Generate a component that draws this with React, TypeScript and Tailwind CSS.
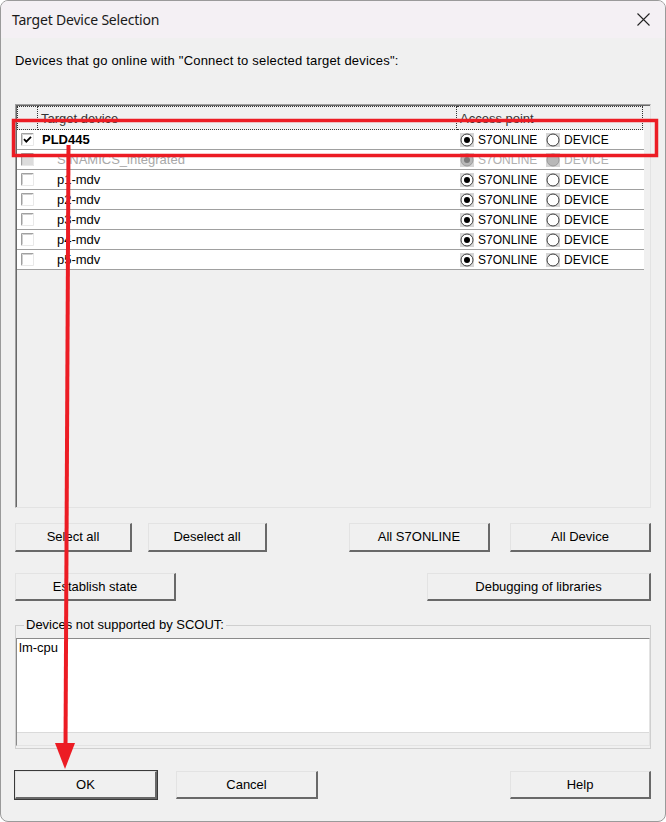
import React from 'react';

const devices = [
  { name: 'PLD445', checked: true, bold: true, disabled: false },
  { name: 'SINAMICS_integrated', checked: false, bold: false, disabled: true },
  { name: 'p1-mdv', checked: false, bold: false, disabled: false },
  { name: 'p2-mdv', checked: false, bold: false, disabled: false },
  { name: 'p3-mdv', checked: false, bold: false, disabled: false },
  { name: 'p4-mdv', checked: false, bold: false, disabled: false },
  { name: 'p5-mdv', checked: false, bold: false, disabled: false },
];

function Checkbox({ checked, disabled }: { checked: boolean; disabled: boolean }) {
  return (
    <svg width="13" height="13" viewBox="0 0 13 13">
      <rect x="0" y="0" width="13" height="13" fill={disabled ? '#dcdcdc' : '#ffffff'} />
      <path d="M0.5 12.5 V0.5 H12.5" fill="none" stroke="#a0a0a0" />
      <path d="M1.5 11.5 V1.5 H11.5" fill="none" stroke="#d0d0d0" />
      <path d="M0.5 12.5 H12.5 V0.5" fill="none" stroke="#e8e8e8" />
      {checked && <path d="M3 6.2 L5.3 8.6 L10 3.8" fill="none" stroke="#000" strokeWidth="1.8" />}
    </svg>
  );
}

function Radio({ on, disabled }: { on: boolean; disabled: boolean }) {
  return (
    <svg width="14" height="14" viewBox="0 0 14 14">
      <rect x="0" y="0" width="14" height="14" fill="#d6d6d6" />
      <circle cx="7" cy="7" r="6" fill={disabled ? '#b8b8b8' : '#ffffff'} stroke={disabled ? '#9a9a9a' : '#3c3c3c'} strokeWidth="1" />
      {on && <circle cx="7" cy="7" r="3" fill={disabled ? '#7a7a7a' : '#000000'} />}
    </svg>
  );
}

function Btn({ label, className = '', isDefault = false }: { label: string; className?: string; isDefault?: boolean }) {
  return (
    <button
      className={
        'flex items-center justify-center bg-[#f0f0f0] text-[13px] text-black border-t border-l border-t-[#e3e3e3] border-l-[#e3e3e3] border-r-2 border-b-2 border-r-[#696969] border-b-[#696969] ' +
        (isDefault ? 'outline outline-1 outline-[#3a3a3a] ' : '') +
        className
      }
    >
      {label}
    </button>
  );
}

export default function App() {
  return (
    <div className="w-[666px] h-[822px] bg-white">
      <div className="relative w-[666px] h-[822px] rounded-[8px] border border-[#9a9a9a] overflow-hidden bg-[#f0f0f0] font-['Liberation_Sans',Arial,sans-serif] text-black">
        {/* title bar */}
        <div className="h-[37px] bg-[#f4f0f4] flex items-center justify-between pl-[11px] pr-[15px]">
          <span className="font-['Noto_Sans',sans-serif] text-[14px] tracking-[-0.2px] text-[#1a1a1a]">Target Device Selection</span>
          <svg width="13" height="13" viewBox="0 0 13 13">
            <path d="M0.5 0.5 L12.5 12.5 M12.5 0.5 L0.5 12.5" stroke="#222" strokeWidth="1.1" />
          </svg>
        </div>

        <div className="px-[14px]">
          <div className="mt-[15px] text-[13px] leading-[16px] tracking-[0.2px]">
            Devices that go online with "Connect to selected target devices":
          </div>

          {/* device list */}
          <div className="mt-[35px] h-[404px] border-t border-l border-[#a0a0a0] border-r border-b border-r-[#e3e3e3] border-b-[#e3e3e3]">
            <div className="h-full border-t border-l border-[#696969] border-r-0 border-b-0 pr-[6px]">
              <div className="flex h-[24px] text-[13px] text-[#333]">
                <div className="w-[21px] border border-dotted border-[#333]" />
                <div className="w-[419px] border border-l-0 border-dotted border-[#333] pl-[3px] leading-[24px]">Target device</div>
                <div className="w-[186px] border border-l-0 border-dotted border-[#333] pl-[3px] leading-[24px]">Access point</div>
              </div>
              {devices.map((d) => (
                <div key={d.name} className="flex items-center h-[20px] bg-white border-b border-[#a0a0a0] text-[13px]">
                  <div className="w-[21px] pl-[4px] flex items-center">
                    <Checkbox checked={d.checked} disabled={d.disabled} />
                  </div>
                  <div
                    className={
                      'w-[419px] ' +
                      (d.bold ? 'pl-[4px] font-bold ' : 'pl-[19px] ') +
                      (d.disabled ? 'text-[#a8a8a8]' : 'text-black')
                    }
                  >
                    {d.name}
                  </div>
                  <div className={'flex items-center pl-[3px] text-[12px] ' + (d.disabled ? 'text-[#b0b0b0]' : 'text-black')}>
                    <Radio on={true} disabled={d.disabled} />
                    <span className="ml-[4px] w-[68px]">S7ONLINE</span>
                    <Radio on={false} disabled={d.disabled} />
                    <span className="ml-[4px]">DEVICE</span>
                  </div>
                </div>
              ))}
            </div>
          </div>

          <div className="mt-[15px] flex h-[29px]">
            <Btn label="Select all" className="w-[117px]" />
            <Btn label="Deselect all" className="w-[119px] ml-[16px]" />
            <Btn label="All S7ONLINE" className="w-[141px] ml-auto" />
            <Btn label="All Device" className="w-[141px] ml-[20px]" />
          </div>

          <div className="mt-[21px] flex h-[28px]">
            <Btn label="Establish state" className="w-[161px]" />
            <Btn label="Debugging of libraries" className="w-[224px] ml-auto" />
          </div>

          <fieldset className="mt-[16px] border border-[#cfcfcf] h-[132px]">
            <legend className="ml-[8px] px-[2px] text-[13px] leading-[16px]">Devices not supported by SCOUT:</legend>
            <div className="mt-[5px] border-t border-l border-[#8a8a8a] border-r border-b border-r-[#e3e3e3] border-b-[#e3e3e3]">
              <div className="h-[93px] bg-white text-[13px] leading-[16px] pl-[2px] pt-[1px]">lm-cpu</div>
              <div className="h-[13px] bg-[#f0f0f0] border-t border-[#dadada]" />
            </div>
          </fieldset>

          <div className="mt-[22px] flex h-[28px]">
            <Btn label="OK" isDefault className="w-[142px]" />
            <Btn label="Cancel" className="w-[142px] ml-[19px]" />
            <Btn label="Help" className="w-[141px] ml-auto" />
          </div>
        </div>

        {/* red annotation overlay */}
        <svg className="absolute left-0 top-0 pointer-events-none" width="666" height="822" viewBox="0 0 666 822">
          <rect x="12.5" y="119.5" width="643" height="35" fill="none" stroke="#ec1c24" strokeWidth="3.5" />
          <path d="M67.5 144 L64.5 748" stroke="#ec1c24" strokeWidth="4" />
          <polygon points="54,742 74,742 64,768" fill="#ec1c24" />
        </svg>
      </div>
    </div>
  );
}
